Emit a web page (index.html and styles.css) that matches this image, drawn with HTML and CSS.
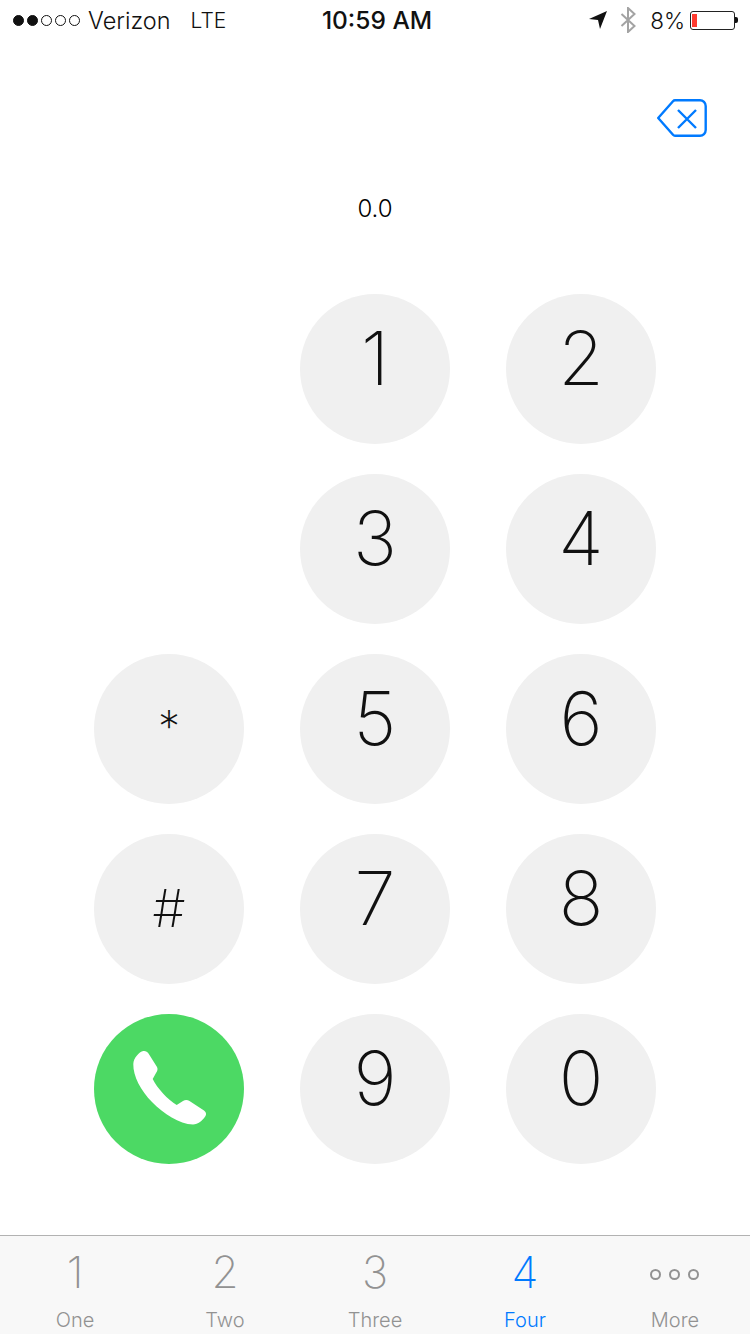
FILE: index.html
```html
<!DOCTYPE html>
<html lang="en">
<head>
<meta charset="utf-8">
<title>Dial pad</title>
<link rel="stylesheet" href="styles.css">
</head>
<body>
<div class="app">
  <div class="status">
    <div class="status-left">
      <div class="signal"><i class="dot on"></i><i class="dot on"></i><i class="dot"></i><i class="dot"></i><i class="dot"></i></div>
      <span class="carrier">Verizon</span>
      <span class="net">LTE</span>
    </div>
    <div class="status-time">10:59 AM</div>
    <div class="status-right">
      <svg class="loc" width="18" height="18" viewBox="0 0 18 18"><path d="M18 0L0 8l9 1 2 9z" fill="#111"/></svg>
      <svg class="bt" width="16" height="26" viewBox="0 0 16 26"><path d="M1.500 7l13 12-6.500 6V1l6.500 6-13 12" fill="none" stroke="#a3a3a3" stroke-width="2"/></svg>
      <span class="pct">8%</span>
      <div class="battery"><div class="battery-body"><div class="battery-fill"></div></div><div class="battery-cap"></div></div>
    </div>
  </div>
  <div class="top">
    <svg class="back" width="50" height="38" viewBox="0 0 50 38"><path d="M1.200 19L16 2.200c.6-.7 1.200-1 2-1h25c3 0 5.700 2.500 5.700 5.700v24.200c0 3-2.600 5.700-5.700 5.700H18c-.8 0-1.400-.3-2-1z" fill="none" stroke="#007aff" stroke-width="2.400" stroke-linejoin="round"/><path d="M21 11l18 18M39 11L21 29" stroke="#007aff" stroke-width="2.400" fill="none"/></svg>
  </div>
  <div class="display">0.0</div>
  <div class="pad">
    <div class="key start2">1</div>
    <div class="key">2</div>
    <div class="key start2">3</div>
    <div class="key">4</div>
    <div class="key sym star">*</div>
    <div class="key">5</div>
    <div class="key">6</div>
    <div class="key sym hash">#</div>
    <div class="key">7</div>
    <div class="key">8</div>
    <div class="key call">
      <svg width="150" height="150" viewBox="0 0 150 150"><path d="M39.300 50C39.500 44 45 38 49.300 37C51.500 36.600 53.500 38 54.500 39.500L63 53C64 55 63.500 57 62 59L58.700 65C63 74 74 86 82.700 91L89 87C91 85.500 93.500 85.500 95.500 87L110 96.500C112 98 112.700 100 111.500 102C108.500 107 104 110 99 110.500C85 110 70 100 58 88C47 77 39 62 39.300 50Z" fill="#fff"/></svg>
    </div>
    <div class="key">9</div>
    <div class="key">0</div>
  </div>
  <div class="tabs">
    <div class="tab"><span class="tab-num">1</span><span class="tab-label">One</span></div>
    <div class="tab"><span class="tab-num">2</span><span class="tab-label">Two</span></div>
    <div class="tab"><span class="tab-num">3</span><span class="tab-label">Three</span></div>
    <div class="tab active"><span class="tab-num">4</span><span class="tab-label">Four</span></div>
    <div class="tab">
      <span class="tab-more"><i class="ring"></i><i class="ring"></i><i class="ring"></i></span>
      <span class="tab-label">More</span>
    </div>
  </div>
</div>
</body>
</html>
```
FILE: styles.css
```css
* { box-sizing: border-box; }
html, body { margin: 0; padding: 0; background: #fff; }
body { font-family: Inter, "Liberation Sans", sans-serif; color: #111; }
.app { width: 750px; height: 1334px; display: flex; flex-direction: column; overflow: hidden; }

.status { height: 40px; flex: none; display: flex; align-items: center; padding: 0 12px 0 13px; font-size: 23.5px; font-weight: 350; }
.status-left { flex: 1; display: flex; align-items: center; }
.status-right { flex: 1; display: flex; align-items: center; justify-content: flex-end; }
.status-time { font-weight: 500; font-size: 24.500px; margin-left: 3px; }
.signal { display: flex; gap: 3px; margin-right: 8px; }
.dot { width: 11px; height: 11px; border-radius: 50%; border: 1.200px solid #111; display: block; }
.dot.on { background: #111; }
.carrier { margin-right: 20px; }
.net { font-size: 21px; }
.loc { margin-right: 13px; }
.bt { margin-right: 14px; }
.pct { margin-right: 5px; font-size: 22.500px; }
.battery { display: flex; align-items: center; }
.battery-body { width: 45px; height: 19px; border: 1.200px solid #222; border-radius: 3px; padding: 2px 1px; }
.battery-fill { width: 5px; height: 100%; background: #ff3b30; }
.battery-cap { width: 3px; height: 6px; background: #111; border-radius: 0 2px 2px 0; }

.top { flex: none; height: 100px; padding: 59px 43px 0 0; display: flex; justify-content: flex-end; align-items: flex-start; }
.back { display: block; }
.display { flex: none; height: 154px; padding-top: 54px; text-align: center; font-size: 24px; line-height: 30px; color: #000; font-weight: 350; }

.pad { flex: none; display: grid; grid-template-columns: repeat(3, 150px); column-gap: 56px; row-gap: 30px; padding-left: 94px; }
.key { width: 150px; height: 150px; border-radius: 50%; background: #f0f0f0; display: flex; align-items: center; justify-content: center; font-size: 74px; font-weight: 160; line-height: 1; padding-bottom: 22px; color: #111; }
.start2 { grid-column-start: 2; }
.sym { font-weight: 200; }
.star { font-size: 44px; padding-bottom: 6px; }
.hash { font-size: 52px; padding-bottom: 0; }
.call { background: #4cd964; padding: 0; }
.call svg { display: block; }

.tabs { flex: none; margin-top: 71px; height: 99px; border-top: 1px solid #b2b2b2; background: #f8f8f8; display: grid; grid-template-columns: repeat(5, 150px); }
.tab { display: flex; flex-direction: column; align-items: center; color: #929292; }
.tab-num { height: 60px; display: flex; align-items: center; font-size: 44px; font-weight: 150; line-height: 1; padding-top: 12px; }
.tab-label { font-size: 20px; line-height: 24px; margin-top: 12px; font-weight: 350; }
.tab-more { height: 60px; display: flex; align-items: center; gap: 8px; padding-top: 16px; margin-right: 2px; }
.ring { display: block; width: 11px; height: 11px; border-radius: 50%; border: 2px solid #929292; }
.active { color: #007aff; }
```
